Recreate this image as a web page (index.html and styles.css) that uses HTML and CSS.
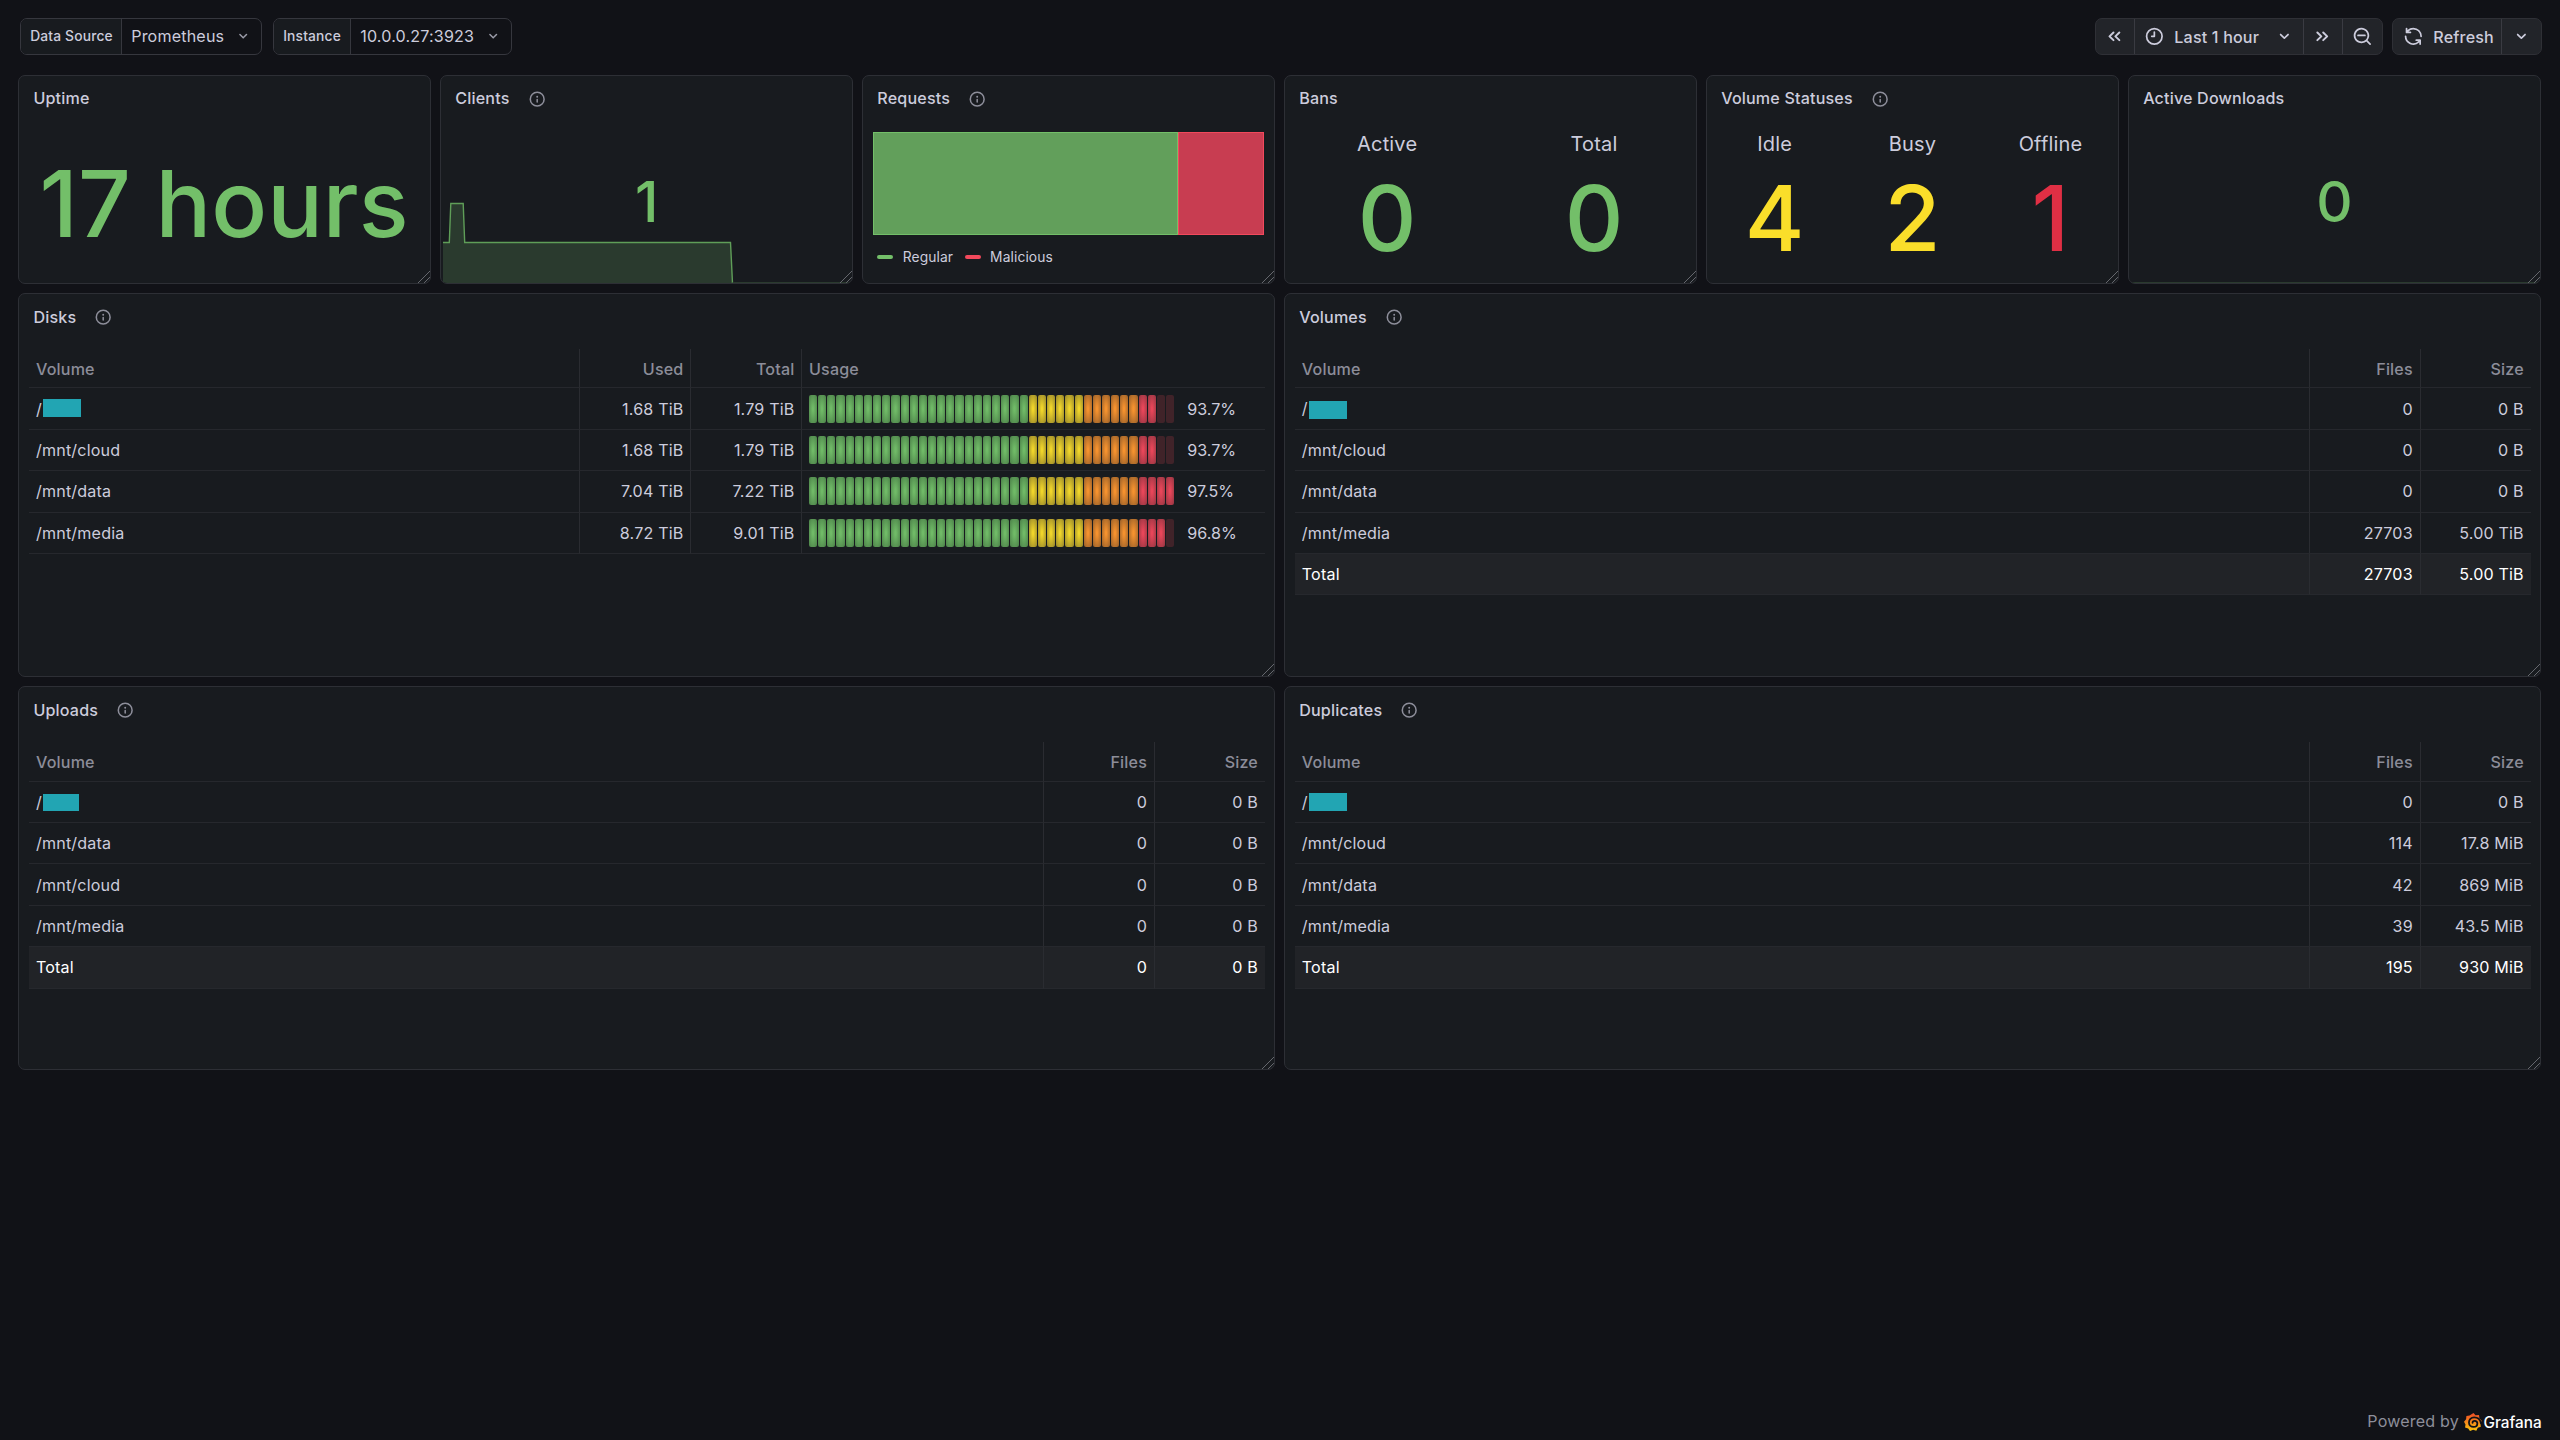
FILE: index.html
```html
<!DOCTYPE html>
<html lang="en">
<head>
    <meta charset="UTF-8">
    <meta name="viewport" content="width=device-width, initial-scale=1.0">
    <title>Dashboard - Grafana</title>

    <link rel="stylesheet" href="styles.css">
</head>
<body>
    <!-- Icon sprite -->
    <svg class="sprite">
        <symbol id="angle-down" viewBox="0 0 24 24"><path d="M17,9.17a1,1,0,0,0-1.41,0L12,12.71,8.46,9.17a1,1,0,0,0-1.41,0,1,1,0,0,0,0,1.42l4.24,4.24a1,1,0,0,0,1.42,0L17,10.59A1,1,0,0,0,17,9.17Z"/></symbol>
        <symbol id="info" viewBox="0 0 24 24"><path d="M12,2A10,10,0,1,0,22,12,10,10,0,0,0,12,2Zm0,18a8,8,0,1,1,8-8A8,8,0,0,1,12,20Zm0-8.5a1,1,0,0,0-1,1v3a1,1,0,0,0,2,0v-3A1,1,0,0,0,12,11.5Zm0-4a1.25,1.25,0,1,0,1.25,1.25A1.25,1.25,0,0,0,12,7.5Z"/></symbol>
        <symbol id="clock" viewBox="0 0 24 24"><path d="M12,2A10,10,0,1,0,22,12,10,10,0,0,0,12,2Zm0,18a8,8,0,1,1,8-8A8,8,0,0,1,12,20ZM12,6a1,1,0,0,0-1,1v4H9a1,1,0,0,0,0,2h3a1,1,0,0,0,1-1V7A1,1,0,0,0,12,6Z"/></symbol>
        <symbol id="search-minus" viewBox="0 0 24 24"><path d="M21.71,20.29,18,16.61A9,9,0,1,0,16.61,18l3.68,3.68a1,1,0,0,0,1.42,0A1,1,0,0,0,21.71,20.29ZM11,18a7,7,0,1,1,7-7A7,7,0,0,1,11,18Zm4-8H7a1,1,0,0,0,0,2h8a1,1,0,0,0,0-2Z"/></symbol>
        <symbol id="sync" viewBox="0 0 24 24"><path d="M19.91,15.51H15.38a1,1,0,0,0,0,2h2.4A8,8,0,0,1,4,12a1,1,0,1,0-2,0,10,10,0,0,0,16.88,7.23V21a1,1,0,0,0,2,0V16.5A1,1,0,0,0,19.91,15.51ZM12,2A10,10,0,0,0,5.12,4.77V3a1,1,0,0,0-2,0V7.5a1,1,0,0,0,1,1h4.5a1,1,0,0,0,0-2H6.22A8,8,0,0,1,20,12a1,1,0,0,0,2,0A10,10,0,0,0,12,2Z"/></symbol>
        <symbol id="double-left" viewBox="0 0 24 24"><path class="stroke" d="M11 7.6 6.4 12l4.6 4.4M17.8 7.6 13.2 12l4.6 4.4"/></symbol>
        <symbol id="double-right" viewBox="0 0 24 24"><path class="stroke" d="M13 7.6l4.6 4.4-4.6 4.4M6.2 7.6l4.6 4.4-4.6 4.4"/></symbol>
    </svg>

    <header class="toolbar">
        <div class="variable">
            <label>Data Source</label>
            <div class="select">Prometheus <svg class="icon small"><use href="#angle-down"/></svg></div>
        </div>
        <div class="variable instance">
            <label>Instance</label>
            <div class="select">10.0.0.27:3923 <svg class="icon small"><use href="#angle-down"/></svg></div>
        </div>
        <div class="buttons time">
            <button class="square"><svg class="icon"><use href="#double-left"/></svg></button>
            <button class="range"><svg class="icon"><use href="#clock"/></svg><span>Last 1 hour</span><svg class="icon"><use href="#angle-down"/></svg></button>
            <button class="square"><svg class="icon"><use href="#double-right"/></svg></button>
            <button class="square"><svg class="icon"><use href="#search-minus"/></svg></button>
        </div>
        <div class="buttons">
            <button class="refresh"><svg class="icon"><use href="#sync"/></svg><span>Refresh</span></button>
            <button class="square"><svg class="icon"><use href="#angle-down"/></svg></button>
        </div>
    </header>

    <main class="dashboard">
        <section class="panel">
            <h2>Uptime</h2>
            <div class="stat huge">17 hours</div>
        </section>

        <section class="panel">
            <h2>Clients <svg class="icon info"><use href="#info"/></svg></h2>
            <div class="stat">1</div>
            <svg class="spark" viewBox="0 0 409 84">
                <path class="area" d="M0 43.5H6.3L7.8 4.5H20.2L21.7 43.5H287.5L289.5 83.5H409V84H0Z"/>
                <path class="line" d="M0 43.5H6.3L7.8 4.5H20.2L21.7 43.5H287.5L289.5 84"/>
                <path class="zero" d="M289.5 83.5H409"/>
            </svg>
        </section>

        <section class="panel">
            <h2>Requests <svg class="icon info"><use href="#info"/></svg></h2>
            <div class="requests">
                <div class="regular" style="width: 77.9%"></div>
                <div class="malicious" style="width: 22.1%"></div>
            </div>
            <div class="legend">
                <span class="dash green"></span><span>Regular</span>
                <span class="dash red"></span><span>Malicious</span>
            </div>
        </section>

        <section class="panel">
            <h2>Bans</h2>
            <div class="stats">
                <div><span class="name">Active</span><span class="value">0</span></div>
                <div><span class="name">Total</span><span class="value">0</span></div>
            </div>
        </section>

        <section class="panel">
            <h2>Volume Statuses <svg class="icon info"><use href="#info"/></svg></h2>
            <div class="stats">
                <div><span class="name">Idle</span><span class="value yellow">4</span></div>
                <div><span class="name">Busy</span><span class="value yellow">2</span></div>
                <div><span class="name">Offline</span><span class="value red">1</span></div>
            </div>
        </section>

        <section class="panel">
            <h2>Active Downloads</h2>
            <div class="stat">0</div>
            <svg class="spark" viewBox="0 0 409 84">
                <path class="zero" d="M0 83.5H409"/>
            </svg>
        </section>

        <section class="panel wide">
            <h2>Disks <svg class="icon info"><use href="#info"/></svg></h2>
            <table class="disks">
                <thead>
                    <tr><th>Volume</th><th class="num">Used</th><th class="num">Total</th><th class="usage">Usage</th></tr>
                </thead>
                <tbody>
                    <tr><td>/<span class="redacted high"></span></td><td class="num">1.68 TiB</td><td class="num">1.79 TiB</td><td class="usage"><div class="gauge" data-value="93.7"></div></td></tr>
                    <tr><td>/mnt/cloud</td><td class="num">1.68 TiB</td><td class="num">1.79 TiB</td><td class="usage"><div class="gauge" data-value="93.7"></div></td></tr>
                    <tr><td>/mnt/data</td><td class="num">7.04 TiB</td><td class="num">7.22 TiB</td><td class="usage"><div class="gauge" data-value="97.5"></div></td></tr>
                    <tr><td>/mnt/media</td><td class="num">8.72 TiB</td><td class="num">9.01 TiB</td><td class="usage"><div class="gauge" data-value="96.8"></div></td></tr>
                </tbody>
            </table>
        </section>

        <section class="panel wide">
            <h2>Volumes <svg class="icon info"><use href="#info"/></svg></h2>
            <table>
                <thead>
                    <tr><th>Volume</th><th class="num">Files</th><th class="num">Size</th></tr>
                </thead>
                <tbody>
                    <tr><td>/<span class="redacted low"></span></td><td class="num">0</td><td class="num">0 B</td></tr>
                    <tr><td>/mnt/cloud</td><td class="num">0</td><td class="num">0 B</td></tr>
                    <tr><td>/mnt/data</td><td class="num">0</td><td class="num">0 B</td></tr>
                    <tr><td>/mnt/media</td><td class="num">27703</td><td class="num">5.00 TiB</td></tr>
                </tbody>
                <tfoot>
                    <tr><td>Total</td><td class="num">27703</td><td class="num">5.00 TiB</td></tr>
                </tfoot>
            </table>
        </section>

        <section class="panel wide">
            <h2>Uploads <svg class="icon info"><use href="#info"/></svg></h2>
            <table>
                <thead>
                    <tr><th>Volume</th><th class="num">Files</th><th class="num">Size</th></tr>
                </thead>
                <tbody>
                    <tr><td>/<span class="redacted short"></span></td><td class="num">0</td><td class="num">0 B</td></tr>
                    <tr><td>/mnt/data</td><td class="num">0</td><td class="num">0 B</td></tr>
                    <tr><td>/mnt/cloud</td><td class="num">0</td><td class="num">0 B</td></tr>
                    <tr><td>/mnt/media</td><td class="num">0</td><td class="num">0 B</td></tr>
                </tbody>
                <tfoot>
                    <tr><td>Total</td><td class="num">0</td><td class="num">0 B</td></tr>
                </tfoot>
            </table>
        </section>

        <section class="panel wide">
            <h2>Duplicates <svg class="icon info"><use href="#info"/></svg></h2>
            <table>
                <thead>
                    <tr><th>Volume</th><th class="num">Files</th><th class="num">Size</th></tr>
                </thead>
                <tbody>
                    <tr><td>/<span class="redacted"></span></td><td class="num">0</td><td class="num">0 B</td></tr>
                    <tr><td>/mnt/cloud</td><td class="num">114</td><td class="num">17.8 MiB</td></tr>
                    <tr><td>/mnt/data</td><td class="num">42</td><td class="num">869 MiB</td></tr>
                    <tr><td>/mnt/media</td><td class="num">39</td><td class="num">43.5 MiB</td></tr>
                </tbody>
                <tfoot>
                    <tr><td>Total</td><td class="num">195</td><td class="num">930 MiB</td></tr>
                </tfoot>
            </table>
        </section>
    </main>

    <footer class="footer">
        <span class="powered">Powered by</span>
        <svg class="logo" viewBox="0 0 24 24">
            <defs>
                <linearGradient id="flame" x1="0" y1="1" x2="0" y2="0">
                    <stop offset="0" stop-color="#fcc50e"/>
                    <stop offset="1" stop-color="#ee4a28"/>
                </linearGradient>
            </defs>
            <path fill="url(#flame)" d="M12.6 0 15.4 2.9 20 2.6 20.6 6.9 23.6 10.4 21.8 13.6 22.4 18.4 18.4 19.6 16.4 23.6 12.2 22.2 8 24 5.6 20.6 1.4 19.4 2 15.2 0 11.6 2.8 8.4 3.2 4 7.4 3.4Z"/>
            <path class="swirl" d="M22.5 13.4C21.6 8.6 18 5.8 13.6 5.8C9.2 5.8 6.6 9 6.6 12.6C6.6 16.4 9.6 18.6 12.8 18.6C16 18.6 17.8 16.4 17.8 14C17.8 11.6 16 10.4 14.2 10.4C12.4 10.4 11.4 11.8 11.4 13"/>
        </svg>
        <span class="brand">Grafana</span>
    </footer>

    <script>
        // Retro LCD gauges: 40 cells, coloured by threshold
        const cellCount = 40;

        function cellColor(percent) {
            if (percent >= 90) return "red";
            if (percent >= 75) return "orange";
            if (percent >= 60) return "yellow";
            return "green";
        }

        document.querySelectorAll(".gauge").forEach((gauge) => {
            const value = parseFloat(gauge.dataset.value);
            for (let i = 0; i < cellCount; i++) {
                const start = i * 100 / cellCount;
                const cell = document.createElement("i");
                cell.className = "cell " + cellColor(start);
                if (start > value) cell.className += " off";
                gauge.appendChild(cell);
            }
            const label = document.createElement("span");
            label.textContent = value + "%";
            gauge.appendChild(label);
        });
    </script>
</body>
</html>
```
FILE: styles.css
```css
* {
    box-sizing: border-box;
}

body {
    margin: 0;
    height: 1440px;
    padding: 18px 18.4px 0;
    display: flex;
    flex-direction: column;
    background: #111217;
    color: #ccccdc;
    font-family: Inter, sans-serif;
    font-size: 16.1px;
    letter-spacing: 0.17px;
    overflow: hidden;
}

.sprite {
    display: none;
}

.icon {
    width: 20.7px;
    height: 20.7px;
    fill: currentColor;
    flex: none;
}

.icon.small {
    width: 18.4px;
    height: 18.4px;
    margin-top: 2px;
    color: #9a9ba8;
}

.icon.info {
    width: 18.4px;
    height: 18.4px;
    margin-left: 18px;
    color: #8d8e9a;
}

.stroke {
    fill: none;
    stroke: currentColor;
    stroke-width: 2.3;
    stroke-linecap: round;
    stroke-linejoin: round;
}

/* Toolbar */
.toolbar {
    display: flex;
    height: 37px;
    margin: 0 0 20px 1.8px;
}

.variable {
    display: flex;
    width: 242px;
    margin-right: 11px;
    border: 1px solid #36373e;
    border-radius: 7px;
    overflow: hidden;
}

.variable label {
    display: flex;
    align-items: center;
    width: 101px;
    padding: 0 0 2px 9px;
    background: #181b1f;
    border-right: 1px solid #36373e;
    font-size: 13.8px;
    font-weight: 500;
}

.variable.instance {
    width: 239px;
}

.variable.instance label {
    width: 77px;
}

.select {
    flex: 1;
    display: flex;
    align-items: center;
    justify-content: space-between;
    padding: 0 9px 2px;
}

.buttons {
    display: flex;
    border: 1px solid #2f3036;
    border-radius: 7px;
    background: #222429;
    overflow: hidden;
    width: 150px;
}

.buttons.time {
    width: 288px;
    margin-left: auto;
    margin-right: 9px;
}

button {
    display: flex;
    align-items: center;
    padding: 0;
    border: 0;
    border-right: 1px solid #3a3b42;
    background: none;
    color: inherit;
    font: inherit;
    font-weight: 500;
    letter-spacing: inherit;
}

button:last-child {
    border-right: 0;
}

button.square {
    width: 39px;
    flex: none;
    justify-content: center;
}

button.range {
    width: 169px;
    padding-left: 9px;
}

button.range span {
    width: 110px;
    padding-left: 10px;
    text-align: left;
}

button.refresh {
    flex: 1;
    padding-left: 10px;
    gap: 10px;
}

/* Panels */
.dashboard {
    display: grid;
    grid-template-columns: repeat(6, 1fr);
    grid-template-rows: 209px 384px 384px;
    gap: 9.2px;
    width: 2522.5px;
}

.panel {
    position: relative;
    display: flex;
    flex-direction: column;
    min-width: 0;
    border: 1px solid #2d2f35;
    border-radius: 7px;
    background: #181b1f;
    overflow: hidden;
}

.panel.wide {
    grid-column: span 3;
}

/* Resize handle */
.panel::after {
    content: "";
    position: absolute;
    right: 0;
    bottom: 0;
    width: 12px;
    height: 12px;
    background: linear-gradient(135deg, transparent 47%, #66686e 47%, #66686e 54%, transparent 54%, transparent 71%, #66686e 71%, #66686e 78%, transparent 78%);
}

h2 {
    display: flex;
    align-items: center;
    flex: none;
    height: 46px;
    margin: 0;
    padding: 0 0 1.5px 14px;
    font-size: 16.1px;
    font-weight: 500;
}

h2 .icon.info {
    margin-top: 1.5px;
}

.wide h2 {
    padding-bottom: 0;
}

.wide h2 .icon.info {
    margin-top: 0.5px;
}

.stat {
    flex: 1;
    display: flex;
    align-items: center;
    justify-content: center;
    padding-bottom: 1px;
    color: #73bf69;
    font-size: 56.4px;
    font-weight: 500;
    line-height: 1;
    letter-spacing: 0;
}

.stat.huge {
    padding: 1px 1.5px 0 0;
    font-size: 92.6px;
}

.spark {
    position: absolute;
    left: 2px;
    bottom: 0;
    width: 409px;
    height: 84px;
}

.spark .area {
    fill: #2a3a2e;
}

.spark .line {
    fill: none;
    stroke: #5f9e58;
    stroke-width: 1.4;
}

.spark .zero {
    stroke: #2a3a2e;
}

.requests {
    display: flex;
    height: 103px;
    margin: 10px 10px 0;
}

.regular {
    background: #629f5b;
    border: 1px solid #73bf69;
}

.malicious {
    background: #c83d51;
    border: 1px solid #f2495c;
}

.legend {
    display: flex;
    align-items: center;
    margin: 14px 0 0 14px;
    font-size: 13.8px;
    letter-spacing: 0.1px;
}

.dash {
    width: 16px;
    height: 4px;
    border-radius: 2px;
    margin-right: 9.5px;
}

.dash.green {
    background: #73bf69;
}

.dash.red {
    background: #f2495c;
    margin-left: 11.5px;
}

.stats {
    display: flex;
    flex: 1;
    margin: 0 -1.5px;
}

.stats div {
    display: flex;
    flex-direction: column;
    align-items: center;
    flex: 1;
}

.name {
    margin-top: 8px;
    font-size: 20px;
    line-height: 28px;
}

.value {
    margin-top: 13.5px;
    color: #73bf69;
    font-size: 91px;
    font-weight: 500;
    line-height: 92px;
    letter-spacing: 0;
}

.value.yellow {
    color: #fade2a;
}

.value.red {
    color: #e02f44;
}

/* Tables */
table {
    width: 1236px;
    margin: 8.6px 0 0 9.6px;
    border-collapse: separate;
    border-spacing: 0;
    table-layout: fixed;
}

th, td {
    height: 41.4px;
    padding: 0 7px;
    border-bottom: 1px solid #26282d;
    text-align: left;
    font-weight: 400;
    white-space: nowrap;
}

th {
    height: 39.6px;
    padding-top: 2px;
    color: #8c8d99;
    font-weight: 500;
}

th.num {
    width: 111px;
}

th.usage {
    width: 463.5px;
}

th + th, td + td {
    border-left: 1px solid #2a2c31;
}

.usage {
    padding-left: 6.5px;
}

.num {
    text-align: right;
}

tfoot td {
    background: #212327;
    color: #fff;
}

.redacted {
    display: inline-block;
    width: 38px;
    height: 18px;
    margin-left: 1px;
    vertical-align: -3px;
    background: #22a5b3;
}

.redacted.high {
    vertical-align: -2px;
}

.redacted.low {
    vertical-align: -5px;
}

.redacted.short {
    width: 36px;
    height: 17px;
    vertical-align: -3px;
}

.gauge {
    display: flex;
    align-items: center;
}

.cell {
    width: 8.17px;
    height: 28px;
    margin-right: 1px;
    border-radius: 2px;
}

.gauge span {
    margin-left: 12px;
    letter-spacing: 0;
}

.cell.green {
    background: radial-gradient(#70ba67 10%, #4b8048);
}

.cell.yellow {
    background: radial-gradient(#f0d52a 10%, #94842a);
}

.cell.orange {
    background: radial-gradient(#f5922f 10%, #965e29);
}

.cell.red {
    background: radial-gradient(#e84659 10%, #933541);
}

.cell.off {
    background: #402329;
}

/* Footer */
.footer {
    display: flex;
    align-items: center;
    justify-content: flex-end;
    margin-top: auto;
    padding-bottom: 7px;
    color: #8d8e9a;
}

.powered {
    margin-right: 5px;
    padding-bottom: 2px;
}

.logo {
    width: 18px;
    height: 18px;
    margin-right: 1.5px;
}

.swirl {
    fill: none;
    stroke: #111217;
    stroke-width: 2.4;
    stroke-linecap: round;
}

.brand {
    color: #fff;
    font-size: 15.3px;
    font-weight: 500;
    letter-spacing: 0;
}
```
